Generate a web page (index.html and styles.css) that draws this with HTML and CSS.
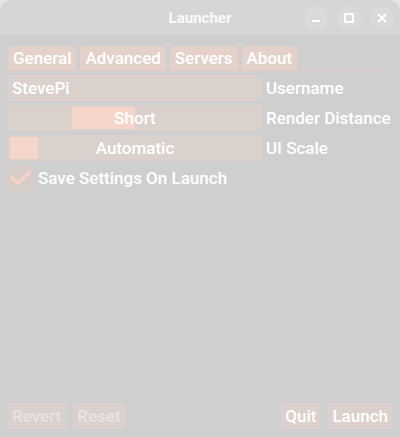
FILE: index.html
```html
<!DOCTYPE html>
<html>
<head>
<meta charset="utf-8">
<link rel="stylesheet" href="styles.css">
</head>
<body>
<div class="window">
  <header class="titlebar">
    <div class="title">Launcher</div>
    <div class="controls">
      <button class="ctl" aria-label="Minimize">
        <svg width="12" height="12" viewBox="0 0 12 12"><rect x="2" y="8" width="8" height="2" fill="#fff"/></svg>
      </button>
      <button class="ctl" aria-label="Maximize">
        <svg width="12" height="12" viewBox="0 0 12 12"><rect x="2" y="2" width="8" height="8" fill="none" stroke="#fff" stroke-width="2"/></svg>
      </button>
      <button class="ctl" aria-label="Close">
        <svg width="12" height="12" viewBox="0 0 12 12"><path d="M2 2 L10 10 M10 2 L2 10" stroke="#fff" stroke-width="2"/></svg>
      </button>
    </div>
  </header>
  <main class="content">
    <nav class="tabs">
      <div class="tab">General</div>
      <div class="tab">Advanced</div>
      <div class="tab">Servers</div>
      <div class="tab">About</div>
    </nav>
    <div class="rows">
      <div class="row">
        <div class="field field-text">StevePi</div>
        <div class="label">Username</div>
      </div>
      <div class="row">
        <div class="field field-slider"><span class="handle" style="left:64px;width:63px"></span><span class="value">Short</span></div>
        <div class="label">Render Distance</div>
      </div>
      <div class="row">
        <div class="field field-slider"><span class="handle" style="left:2px;width:28px"></span><span class="value">Automatic</span></div>
        <div class="label">UI Scale</div>
      </div>
      <div class="row check-row">
        <div class="checkbox">
          <svg width="26" height="26" viewBox="0 0 26 26"><path d="M4 12.5 L10 18.5 L21.5 7" fill="none" stroke="#f6d3c7" stroke-width="3.5" stroke-linecap="round" stroke-linejoin="round"/></svg>
        </div>
        <div class="label">Save Settings On Launch</div>
      </div>
    </div>
    <footer class="footer">
      <div class="group">
        <button class="btn disabled">Revert</button>
        <button class="btn disabled">Reset</button>
      </div>
      <div class="group">
        <button class="btn">Quit</button>
        <button class="btn">Launch</button>
      </div>
    </footer>
  </main>
</div>
</body>
</html>
```
FILE: styles.css
```css
html, body {
  margin: 0;
  padding: 0;
  background: #e6e6e6;
}
body {
  font-family: Roboto, "Noto Sans", sans-serif;
  font-weight: 500;
  color: #ffffff;
}
.window {
  width: 400px;
  height: 437px;
  background: #cfcfcf;
  border-radius: 12px 12px 0 0;
  display: flex;
  flex-direction: column;
  overflow: hidden;
}
.titlebar {
  height: 36px;
  flex: none;
  background: #d6d6d6;
  border-bottom: 1px solid #cbcbcb;
  box-sizing: border-box;
  display: flex;
  align-items: center;
  justify-content: flex-end;
  position: relative;
  padding-right: 6px;
}
.title {
  position: absolute;
  left: 0;
  right: 0;
  text-align: center;
  font-family: Roboto, "Noto Sans", sans-serif;
  font-weight: 700;
  font-size: 15px;
  color: #fafafa;
  pointer-events: none;
}
.controls {
  display: flex;
  gap: 9px;
}
.ctl {
  width: 24px;
  height: 24px;
  border-radius: 50%;
  border: none;
  padding: 0;
  background: #dadada;
  display: flex;
  align-items: center;
  justify-content: center;
}
.content {
  flex: 1;
  display: flex;
  flex-direction: column;
  padding: 10px 8px 8px 8px;
}
.tabs {
  display: flex;
  gap: 4px;
  border-bottom: 1px solid #e8c9bf;
}
.tab {
  height: 24px;
  line-height: 24px;
  padding: 0 5px;
  background: #e4d1ca;
  border-radius: 4px 4px 0 0;
  font-size: 17px;
}
.rows {
  display: flex;
  flex-direction: column;
  gap: 4px;
  margin-top: 4px;
}
.row {
  display: flex;
  align-items: center;
  gap: 4px;
  height: 26px;
}
.field {
  width: 254px;
  height: 26px;
  background: #dad1cd;
  box-sizing: border-box;
  font-size: 17px;
  line-height: 26px;
}
.field-text {
  padding-left: 4px;
}
.field-slider {
  position: relative;
  text-align: center;
}
.handle {
  position: absolute;
  top: 2px;
  bottom: 2px;
  background: #f6d6cb;
}
.value {
  position: relative;
}
.label {
  font-size: 17px;
  line-height: 26px;
  white-space: nowrap;
}
.checkbox {
  width: 26px;
  height: 26px;
  background: #d8ccc8;
  display: flex;
}
.footer {
  margin-top: auto;
  display: flex;
  justify-content: space-between;
  align-items: flex-end;
}
.group {
  display: flex;
  gap: 8px;
}
.btn {
  height: 26px;
  border: none;
  background: #dbd0cc;
  color: #ffffff;
  font-family: Roboto, "Noto Sans", sans-serif;
  font-weight: 500;
  font-size: 17px;
  padding: 0 4px;
}
.btn.disabled {
  color: #e9e3e1;
}
```
